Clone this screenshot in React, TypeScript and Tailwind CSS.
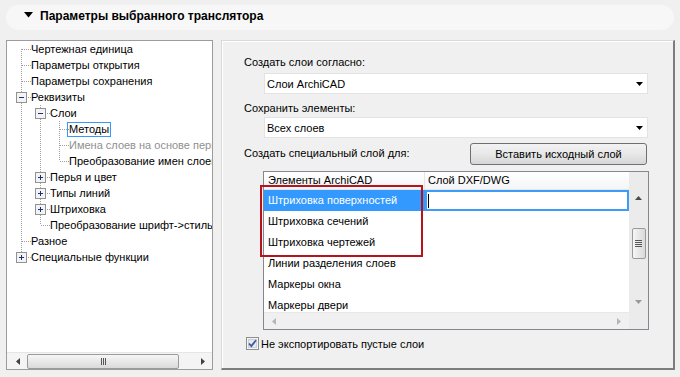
import React from "react";

type Row = {
  label: string;
  level: number;
  anc: boolean[];
  last?: boolean;
  first?: boolean;
  box?: "minus" | "plus";
  gray?: boolean;
  focus?: boolean;
};

const rows: Row[] = [
  { label: "Чертежная единица", level: 0, anc: [], first: true },
  { label: "Параметры открытия", level: 0, anc: [] },
  { label: "Параметры сохранения", level: 0, anc: [] },
  { label: "Реквизиты", level: 0, anc: [], box: "minus" },
  { label: "Слои", level: 1, anc: [true], box: "minus" },
  { label: "Методы", level: 2, anc: [true, true], focus: true },
  { label: "Имена слоев на основе перьев", level: 2, anc: [true, true], gray: true },
  { label: "Преобразование имен слоев", level: 2, anc: [true, true], last: true },
  { label: "Перья и цвет", level: 1, anc: [true], box: "plus" },
  { label: "Типы линий", level: 1, anc: [true], box: "plus" },
  { label: "Штриховка", level: 1, anc: [true], box: "plus" },
  { label: "Преобразование шрифт->стиль", level: 1, anc: [true], last: true },
  { label: "Разное", level: 0, anc: [] },
  { label: "Специальные функции", level: 0, anc: [], last: true, box: "plus" },
];

function Cell({ vTop, vBottom, h, box }: { vTop?: boolean; vBottom?: boolean; h?: boolean; box?: "minus" | "plus" }) {
  return (
    <svg width="19" height="16" className="shrink-0" shapeRendering="crispEdges">
      {vTop && <line x1="9.5" y1="0" x2="9.5" y2="8" stroke="#a0a0a0" strokeDasharray="1 1" />}
      {vBottom && <line x1="9.5" y1="8" x2="9.5" y2="16" stroke="#a0a0a0" strokeDasharray="1 1" />}
      {h && <line x1="10" y1="8.5" x2="19" y2="8.5" stroke="#a0a0a0" strokeDasharray="1 1" />}
      {box && (
        <g>
          <rect x="4.5" y="3.5" width="10" height="10" fill="#f3f3f3" stroke="#929292" />
          <rect x="7" y="8" width="5" height="1" fill="#1e3070" />
          {box === "plus" && <rect x="9" y="6" width="1" height="5" fill="#1e3070" />}
        </g>
      )}
    </svg>
  );
}

function TreeRow({ r }: { r: Row }) {
  return (
    <div className="flex h-[16px] items-center whitespace-nowrap">
      {r.anc.map((a, i) => (
        <Cell key={i} vTop={a} vBottom={a} />
      ))}
      <Cell vTop={!r.first} vBottom={!r.last} h box={r.box} />
      <span
        className={
          "ml-[-1px] leading-[13px] px-[1px] " +
          (r.gray ? "text-[#8f8f8f] " : "text-black ") +
          (r.focus ? "outline outline-1 outline-[#3399ff]" : "")
        }
      >
        {r.label}
      </span>
    </div>
  );
}

function ArrowLeft({ color = "#404040" }: { color?: string }) {
  return (
    <svg width="4" height="7" viewBox="0 0 4 7">
      <polygon points="4,0 0,3.5 4,7" fill={color} />
    </svg>
  );
}
function ArrowRight({ color = "#404040" }: { color?: string }) {
  return (
    <svg width="4" height="7" viewBox="0 0 4 7">
      <polygon points="0,0 4,3.5 0,7" fill={color} />
    </svg>
  );
}
function ArrowUp({ color = "#404040" }: { color?: string }) {
  return (
    <svg width="7" height="4" viewBox="0 0 7 4">
      <polygon points="0,4 3.5,0 7,4" fill={color} />
    </svg>
  );
}
function ArrowDown({ color = "#000" }: { color?: string }) {
  return (
    <svg width="7" height="4" viewBox="0 0 7 4">
      <polygon points="0,0 7,0 3.5,4" fill={color} />
    </svg>
  );
}

function Dropdown({ text }: { text: string }) {
  return (
    <div className="ml-[20px] w-[384px] h-[21px] bg-white border border-[#e3e3e3] flex items-center justify-between pl-[2px] pr-[4px]">
      <span className="leading-[14px]">{text}</span>
      <ArrowDown />
    </div>
  );
}

const tableRows = [
  "Штриховка поверхностей",
  "Штриховка сечений",
  "Штриховка чертежей",
  "Линии разделения слоев",
  "Маркеры окна",
  "Маркеры двери",
];

export default function App() {
  return (
    <div className="w-[680px] h-[377px] overflow-hidden bg-[#f0f0f0] text-[11px] text-black font-['Liberation_Sans',Arial,sans-serif]">
      {/* Header */}
      <div className="mx-[6px] mt-[5px] h-[25px] rounded-[13px] bg-[#f7f7f7] flex items-start pl-[18px] pt-[4px]">
        <svg width="9" height="6" viewBox="0 0 9 6" className="mt-[3px]">
          <polygon points="0,0 9,0 4.5,5.5" fill="#000" />
        </svg>
        <span className="ml-[7px] text-[12px] font-bold leading-[14px]">Параметры выбранного транслятора</span>
      </div>

      <div className="flex mt-[10px] ml-[6px] gap-[8px]">
        {/* Tree */}
        <div className="w-[207px] h-[330px] border border-[#9c9c9c] bg-white flex flex-col">
          <div className="flex-1 overflow-hidden pl-[5px]">
            {rows.map((r, i) => (
              <TreeRow key={i} r={r} />
            ))}
          </div>
          <div className="h-[17px] border-t border-[#e6e6e6] bg-[#f4f4f4] flex items-center">
            <div className="w-[20px] flex justify-center pl-[2px]">
              <ArrowLeft />
            </div>
            <div className="w-[152px] h-[15px] rounded-[2px] border border-[#9a9a9a] bg-gradient-to-b from-[#f6f6f6] to-[#dadada] flex items-center justify-center gap-[1px]">
              <div className="w-[1px] h-[7px] bg-[#555]" />
              <div className="w-[1px] h-[7px] bg-[#555]" />
              <div className="w-[1px] h-[7px] bg-[#555]" />
            </div>
            <div className="flex-1 flex justify-end pr-[7px]">
              <ArrowRight />
            </div>
          </div>
        </div>

        {/* Right panel */}
        <div className="w-[454px] h-[330px] border-t border-l border-[#d9d9d9] border-r-2 border-b-2 border-r-[#7d7d7d] border-b-[#7d7d7d] shadow-[inset_1px_1px_0_#ffffff] pl-[22px] pt-[13px] flex flex-col">
          <div className="h-[16px] leading-[16px]">Создать слои согласно:</div>
          <div className="mt-[3px]">
            <Dropdown text="Слои ArchiCAD" />
          </div>
          <div className="mt-[6px] h-[16px] leading-[16px]">Сохранить элементы:</div>
          <div className="mt-[1px]">
            <Dropdown text="Всех слоев" />
          </div>
          <div className="mt-[5px] w-[403px] h-[22px] flex items-center justify-between">
            <span className="leading-[16px] mt-[-3px]">Создать специальный слой для:</span>
            <div className="w-[177px] h-[22px] rounded-[3px] border border-[#707070] bg-gradient-to-b from-[#f2f2f2] via-[#e8e8e8] to-[#d6d6d6] flex items-center justify-center">
              Вставить исходный слой
            </div>
          </div>

          {/* Table */}
          <div className="relative ml-[19px] mt-[6px] w-[386px] h-[159px] border border-[#828790] bg-white flex">
            <div className="w-[365px] flex flex-col">
              <div className="h-[18px] flex border-b border-[#e5e5e5] bg-gradient-to-b from-white to-[#f4f5f7]">
                <div className="w-[161px] border-r border-[#e5e5e5] pl-[4px] leading-[17px]">Элементы ArchiCAD</div>
                <div className="flex-1 pl-[3px] leading-[17px]">Слой DXF/DWG</div>
              </div>
              <div className="flex-1 overflow-hidden">
                {tableRows.map((t, i) => (
                  <div key={i} className="h-[21px] flex">
                    <div
                      className={
                        "w-[161px] pl-[4px] flex items-center " +
                        (i === 0 ? "bg-[#3399ff] text-white" : "")
                      }
                    >
                      {t}
                    </div>
                    {i === 0 && (
                      <div className="w-[204px] h-[21px] border-2 border-[#3d9cf7] flex items-center pl-[1px]">
                        <div className="w-[1px] h-[14px] bg-black" />
                      </div>
                    )}
                  </div>
                ))}
              </div>
              <div className="h-[17px] border-t border-[#e8e8e8] bg-[#f0f0f0] flex items-center justify-between pl-[8px] pr-[8px]">
                <ArrowLeft color="#b5b5b5" />
                <ArrowRight color="#b5b5b5" />
              </div>
            </div>
            <div className="flex-1 bg-[#ebebeb] flex flex-col items-center">
              <div className="mt-[24px]">
                <ArrowUp color="#4a4a4a" />
              </div>
              <div className="mt-[28px] w-[14px] h-[31px] rounded-[2px] border border-[#9a9a9a] bg-gradient-to-r from-[#f6f6f6] to-[#d9d9d9] flex flex-col items-center justify-center gap-[1px]">
                <div className="w-[7px] h-[1px] bg-[#555]" />
                <div className="w-[7px] h-[1px] bg-[#555]" />
                <div className="w-[7px] h-[1px] bg-[#555]" />
                <div className="w-[7px] h-[1px] bg-[#555]" />
              </div>
              <div className="mt-[41px]">
                <ArrowDown color="#9a9a9a" />
              </div>
            </div>
            {/* Annotation rectangle */}
            <div className="absolute left-[-4px] top-[13px] w-[163px] h-[72px] border-2 border-[#b8121b] pointer-events-none" />
          </div>

          {/* Checkbox */}
          <div className="mt-[7px] ml-[2px] flex items-center h-[13px]">
            <svg width="13" height="13" viewBox="0 0 13 13">
              <rect x="0.5" y="0.5" width="12" height="12" fill="#f4f4f4" stroke="#8f8f8f" />
              <rect x="2.5" y="2.5" width="8" height="8" fill="#e4e8f0" stroke="#c9cfd9" />
              <polyline points="3,6.5 5.3,9 10,3.2" fill="none" stroke="#3b5a9e" strokeWidth="1.8" />
            </svg>
            <span className="ml-[2px] leading-[14px]">Не экспортировать пустые слои</span>
          </div>
        </div>
      </div>
    </div>
  );
}
